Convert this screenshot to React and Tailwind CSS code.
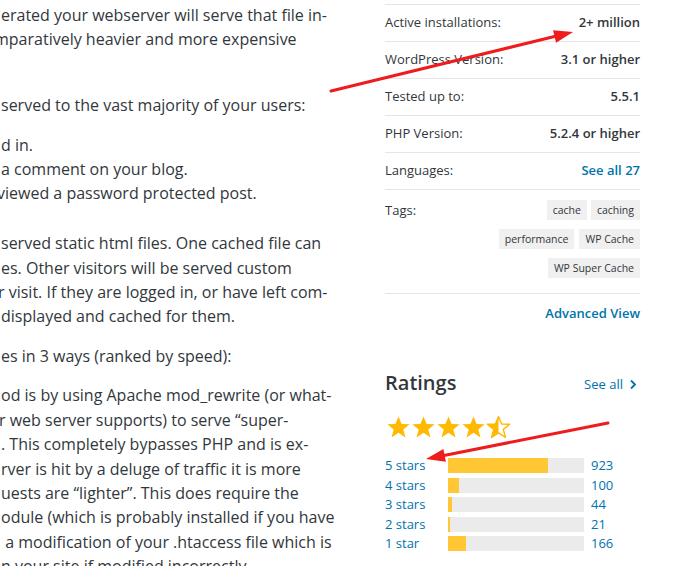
import React from "react";

const font = { fontFamily: '"Open Sans", "Noto Sans", sans-serif' };

function Arrow({ x1, y1, x2, y2 }) {
  const dx = x2 - x1;
  const dy = y2 - y1;
  const len = Math.hypot(dx, dy);
  const ux = dx / len;
  const uy = dy / len;
  const hl = 19;
  const hw = 6.5;
  const bx = x2 - ux * hl;
  const by = y2 - uy * hl;
  const p1 = `${x2},${y2}`;
  const p2 = `${bx - uy * hw},${by + ux * hw}`;
  const p3 = `${bx + uy * hw},${by - ux * hw}`;
  return (
    <g>
      <line x1={x1} y1={y1} x2={bx + ux * 2} y2={by + uy * 2} stroke="#ee1c1c" strokeWidth="3" strokeLinecap="round" />
      <polygon points={`${p1} ${p2} ${p3}`} fill="#ee1c1c" />
    </g>
  );
}

function Star({ half }) {
  const pts = "12.5,1.5 15.6,9 23.6,9.3 17.3,14.4 19.5,22.4 12.5,17.8 5.5,22.4 7.7,14.4 1.4,9.3 9.4,9";
  return (
    <svg width="25" height="24" viewBox="0 0 25 24">
      <defs>
        <clipPath id="halfclip">
          <rect x="0" y="0" width="12.5" height="24" />
        </clipPath>
      </defs>
      {half ? (
        <>
          <polygon points={pts} fill="none" stroke="#ffb900" strokeWidth="1.4" strokeLinejoin="round" />
          <polygon points={pts} fill="#ffb900" clipPath="url(#halfclip)" />
        </>
      ) : (
        <polygon points={pts} fill="#ffb900" />
      )}
    </svg>
  );
}

const rows = [
  ["Active installations:", "2+ million", false],
  ["WordPress Version:", "3.1 or higher", false],
  ["Tested up to:", "5.5.1", false],
  ["PHP Version:", "5.2.4 or higher", false],
  ["Languages:", "See all 27", true],
];

const ratings = [
  ["5 stars", 923, 100],
  ["4 stars", 100, 11],
  ["3 stars", 44, 4],
  ["2 stars", 21, 2],
  ["1 star", 166, 18],
];

function Tag({ children }) {
  return (
    <span className="bg-[#f0f0f0] text-[#32373c] text-[10.5px] leading-[20px] h-[20px] px-[6px] inline-block">
      {children}
    </span>
  );
}

export default function App() {
  return (
    <div className="relative w-[680px] h-[566px] overflow-hidden bg-white flex" style={font}>
      <div className="w-[345px] shrink-0 overflow-hidden text-[#32373c] text-[16px] leading-[24.4px] whitespace-nowrap pt-[3px]">
        <div className="pl-[1px]">
          <p>erated your webserver will serve that file in-</p>
          <p className="-ml-[7px]">mparatively heavier and more expensive</p>
          <p>&nbsp;</p>
          <p className="mt-[17px]">served to the vast majority of your users:</p>
          <ul className="mt-[16.5px] leading-[23.7px]">
            <li>d in.</li>
            <li>a comment on your blog.</li>
            <li className="-ml-[4px]">viewed a password protected post.</li>
          </ul>
          <p className="mt-[26px]">served static html files. One cached file can</p>
          <p>es. Other visitors will be served custom</p>
          <p className="-ml-[3px]">r visit. If they are logged in, or have left com-</p>
          <p>displayed and cached for them.</p>
          <p className="mt-[15.6px]">es in 3 ways (ranked by speed):</p>
          <div className="mt-[14.6px]">
            <p>od is by using Apache mod_rewrite (or what-</p>
            <p className="-ml-[2px]">r web server supports) to serve “super-</p>
            <p>. This completely bypasses PHP and is ex-</p>
            <p>rver is hit by a deluge of traffic it is more</p>
            <p>uests are “lighter”. This does require the</p>
            <p>odule (which is probably installed if you have</p>
            <p>&nbsp;a modification of your .htaccess file which is</p>
            <p>n your site if modified incorrectly.</p>
          </div>
        </div>
      </div>

      <div className="ml-[40px] w-[255px] shrink-0 pt-[4px] text-[13px] text-[#32373c]">
        {rows.map(([label, value, link]) => (
          <div key={label} className="flex justify-between items-center h-[37px] border-t border-[#e5e5e5]">
            <span>{label}</span>
            <span className={link ? "font-semibold text-[#0073aa]" : "font-semibold"}>{value}</span>
          </div>
        ))}
        <div className="flex justify-between border-t border-b border-[#e5e5e5] pt-[10px] pb-[15px]">
          <span className="leading-[17px] pt-[2px]">Tags:</span>
          <div className="flex flex-col items-end gap-[9px]">
            <div className="flex gap-[4px]">
              <Tag>cache</Tag>
              <Tag>caching</Tag>
            </div>
            <div className="flex gap-[5px]">
              <Tag>performance</Tag>
              <Tag>WP Cache</Tag>
            </div>
            <div className="flex">
              <Tag>WP Super Cache</Tag>
            </div>
          </div>
        </div>
        <div className="flex justify-end mt-[9px]">
          <span className="font-semibold text-[#0073aa] leading-[20px]">Advanced View</span>
        </div>

        <div className="flex justify-between items-center mt-[47px]">
          <h2 className="text-[20px] font-semibold leading-[26px] text-[#32373c]">Ratings</h2>
          <span className="text-[#0073aa] flex items-center gap-[6px] pr-[3px] pt-[3px]">
            See all
            <svg width="8" height="11" viewBox="0 0 8 11">
              <path d="M2 1.5 L6 5.5 L2 9.5" fill="none" stroke="#0073aa" strokeWidth="1.8" />
            </svg>
          </span>
        </div>
        <div className="flex mt-[19px] ml-[1px]">
          <Star />
          <Star />
          <Star />
          <Star />
          <Star half />
        </div>
        <div className="mt-[19px] flex flex-col gap-[4.5px]">
          {ratings.map(([label, count, fill]) => (
            <div key={label} className="flex items-center h-[15px]">
              <span className="w-[63px] text-[#0073aa] leading-[15px]">{label}</span>
              <div className="w-[136px] h-[15px] bg-[#ebebeb]">
                <div className="h-full bg-[#ffc733]" style={{ width: fill + "px" }} />
              </div>
              <span className="ml-[7px] text-[#0073aa] leading-[15px]">{count}</span>
            </div>
          ))}
        </div>
      </div>

      <svg className="absolute inset-0 pointer-events-none" width="680" height="566">
        <Arrow x1={331} y1={91} x2={573} y2={32} />
        <Arrow x1={608} y1={423} x2={426} y2={459} />
      </svg>
    </div>
  );
}
